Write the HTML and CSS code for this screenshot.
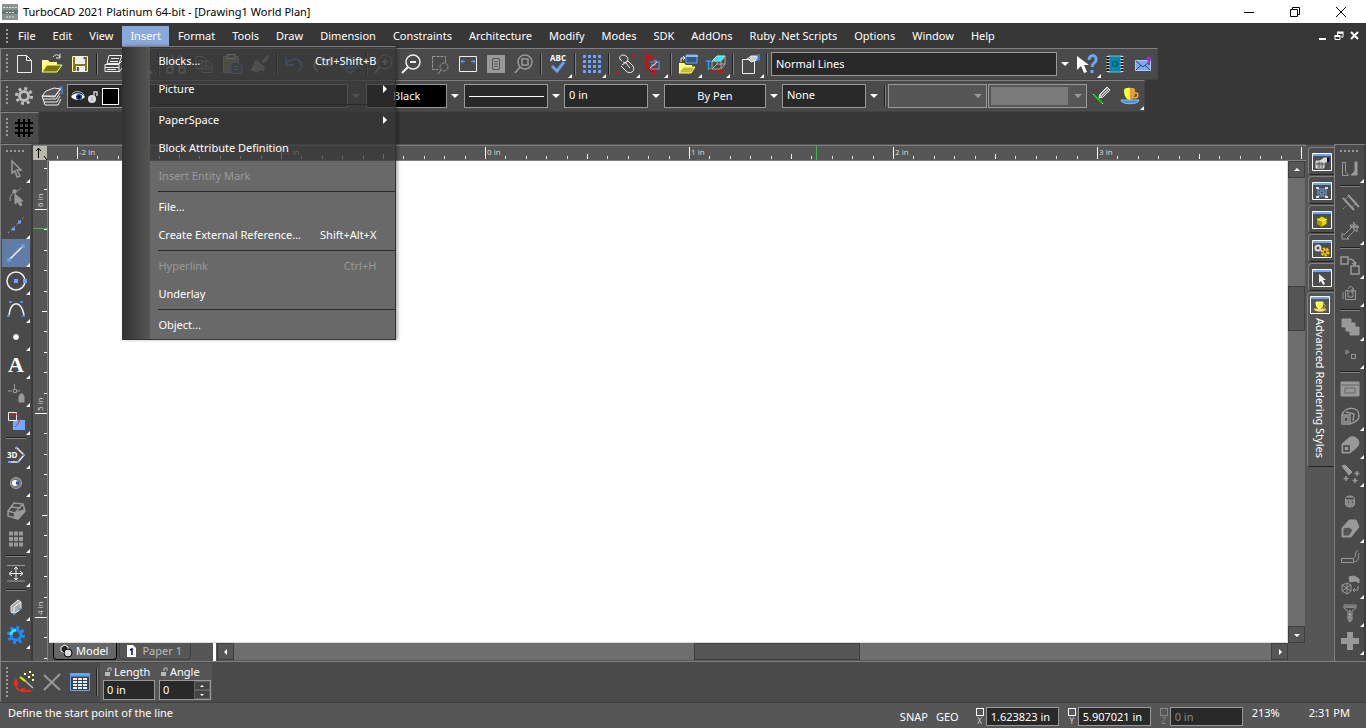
FILE: index.html
```html
<!DOCTYPE html>
<html lang="en">
<head>
    <meta charset="utf-8">
    <title>TurboCAD 2021 Platinum 64-bit - [Drawing1 World Plan]</title>
    <link rel="stylesheet" href="styles.css">
</head>
<body>
    <!-- Title bar -->
    <header class="titlebar">
        <svg class="app-icon" width="16" height="16" viewBox="0 0 16 16"><path fill="#8a9290" d="M0 0h16v16H0z"/><path fill="#6b7673" d="M0 6h16v4H0z"/><path stroke="#dde2e0" d="M1 3.500h14M4 8.500h8M4 13h8" stroke-dasharray="2 1"/></svg>
        <h1>TurboCAD 2021 Platinum 64-bit - [Drawing1 World Plan]</h1>
        <div class="window-buttons">
            <button aria-label="Minimize"><svg width="12" height="12"><path d="M1 6.500h10"/></svg></button>
            <button aria-label="Restore"><svg width="12" height="12"><path d="M1.500 3.500h7v7h-7zM3.500 3.500v-2h7v7h-2"/></svg></button>
            <button aria-label="Close"><svg width="12" height="12"><path d="M1 1l10 10M11 1L1 11"/></svg></button>
        </div>
    </header>

    <!-- Menu bar -->
    <nav class="menubar">
        <i class="grip"></i>
        <button>File</button>
        <button>Edit</button>
        <button>View</button>
        <div class="menu-open">
            <button class="active">Insert</button>
            <div class="dropdown">
                <button>Blocks...<kbd>Ctrl+Shift+B</kbd></button>
                <button class="submenu">Picture</button>
                <hr>
                <button class="submenu">PaperSpace</button>
                <button>Block Attribute Definition</button>
                <button disabled>Insert Entity Mark</button>
                <hr>
                <button>File...</button>
                <button>Create External Reference...<kbd>Shift+Alt+X</kbd></button>
                <hr>
                <button disabled>Hyperlink<kbd>Ctrl+H</kbd></button>
                <button>Underlay</button>
                <hr>
                <button>Object...</button>
            </div>
        </div>
        <button>Format</button>
        <button>Tools</button>
        <button>Draw</button>
        <button>Dimension</button>
        <button>Constraints</button>
        <button>Architecture</button>
        <button>Modify</button>
        <button>Modes</button>
        <button>SDK</button>
        <button>AddOns</button>
        <button>Ruby .Net Scripts</button>
        <button>Options</button>
        <button>Window</button>
        <button>Help</button>
        <div class="mdi-buttons">
            <button aria-label="Minimize drawing"><svg width="10" height="10"><path d="M1 8h7" stroke-width="2"/></svg></button>
            <button aria-label="Restore drawing"><svg width="10" height="10"><path d="M1 5.500h5v3H1zM3.500 4V2H9v4H7"/><path d="M3 1.500h6.500M.5 5h6" stroke-width="2"/></svg></button>
            <button aria-label="Close drawing"><svg width="10" height="10"><path d="M1 1l7 7M8 1L1 8" stroke-width="2"/></svg></button>
        </div>
    </nav>

    <!-- Standard toolbar -->
    <div class="toolbar">
        <i class="grip"></i>
        <button class="tool" aria-label="New"><svg viewBox="0 0 24 24"><path d="M5.500 3.500h9l5 5v12h-14zM14.500 3.500v5h5"/></svg></button>
        <button class="tool" aria-label="Open"><svg viewBox="0 0 24 24"><path d="M2 20V8h6l2 2h7v3H7z" fill="#ffff8a" stroke="none"/><path d="M2 20l5-7h15l-5 7z" fill="#767600" stroke="#ffff8a"/><path d="M13 5c2-3 5-3 7 0M20 1.500V6h-4"/></svg></button>
        <button class="tool" aria-label="Save"><svg viewBox="0 0 24 24"><path d="M4.500 4.500h15v15h-15z" fill="#7c7c16" stroke="#ffff9a"/><path d="M7 4h10v8H7zM8 14h9v6H8z" fill="#eee" stroke="none"/><path d="M10 15v4M16.500 5v2" stroke="#555" stroke-width="2"/></svg></button>
        <i class="sep"></i>
        <button class="tool" aria-label="Print"><svg viewBox="0 0 24 24"><path d="M7 3.500h13l-3 8H5z"/><path d="M9 6.500h8M8 9.500h8M3 12.500h14v7H3zM17 12l5-5v7l-5 6M3 15.500h14M5 17.500h9"/></svg></button>
        <button class="tool" aria-label="Print preview"><svg viewBox="0 0 24 24"><path d="M4 3.500h10v14H4z"/><circle cx="14" cy="13" r="5"/><path d="M17 17l4 4" stroke-width="2"/></svg></button>
        <i class="sep"></i>
        <button class="tool" aria-label="Cut"><svg class="dim" viewBox="0 0 24 24" stroke-width="2"><path d="M7 3l9 12M17 3L8 15"/><circle cx="6" cy="18" r="3"/><circle cx="18" cy="18" r="3"/></svg></button>
        <button class="tool" aria-label="Copy"><svg class="dim" viewBox="0 0 24 24"><path d="M4 4.500h7l3 3v9H4zM10 9.500h7l3 3v8H10zM6 8.500h5M6 11.500h3M12 14h6M12 17h6"/></svg></button>
        <button class="tool" aria-label="Paste"><svg viewBox="0 0 24 24"><path d="M3.500 4.500h15v16h-15z" fill="#99936c" stroke="#aaa"/><path d="M7 2.500h8v4H7z" fill="#777"/><path d="M11 10.500h7l4 4v7H11z" fill="#555" stroke="#68a1ee"/><path d="M13 14.500h5M13 17.500h6" stroke="#68a1ee"/></svg></button>
        <button class="tool" aria-label="Format painter"><svg class="dim" viewBox="0 0 24 24"><path d="M14 9l6-6 1 2-5 6zM8 8l9 8-2 3-9-8zM7 11l-4 7 6 2 5-3z" fill="#999"/></svg></button>
        <i class="sep"></i>
        <button class="tool" aria-label="Undo"><svg class="blue" viewBox="0 0 24 24" stroke-width="2"><path d="M4 5v8h8M4 12c5-6 12-6 15-1 2 4-1 7-3 8"/></svg></button>
        <button class="tool" aria-label="Redo"><svg class="dim" viewBox="0 0 24 24" stroke-width="2"><path d="M20 5v8h-8M20 12C15 6 8 6 5 11c-2 4 1 7 3 8"/></svg></button>
        <button class="tool" aria-label="Orbit"><svg class="blue" viewBox="0 0 24 24" stroke-width="2"><path d="M12 4v13M8 9l4-5 4 5M8 18l4 3 4-3"/><path d="M7 7c-8 6-3 9 5 9s13-4 5-9"/></svg></button>
        <i class="sep"></i>
        <button class="tool" aria-label="Zoom in"><svg class="dim" viewBox="0 0 24 24"><circle cx="13" cy="10" r="7"/><path d="M8 15l-5 6M10 10h6M13 7v6" stroke-width="2"/></svg></button>
        <button class="tool" aria-label="Zoom out"><svg viewBox="0 0 24 24"><circle cx="13" cy="10" r="7" stroke-width="1.500"/><path d="M8 15l-6 6M10 10h6" stroke-width="2"/></svg></button>
        <button class="tool" aria-label="Zoom window"><svg class="dim" viewBox="0 0 24 24"><path d="M4.500 4.500h13v7M4.500 4.500v13h6" stroke-dasharray="3 1"/><circle cx="16" cy="15" r="4" stroke-dasharray="3 1"/><path d="M13 18l-3 4"/></svg></button>
        <button class="tool" aria-label="Zoom extents"><svg viewBox="0 0 24 24"><path d="M3.500 4.500h17v15h-17z"/><path d="M5 9.500h4M19 9.500h-4M7 7.500l-2 2 2 2M17 7.500l2 2-2 2" stroke="#5da4ff"/></svg></button>
        <button class="tool" aria-label="Full view"><svg viewBox="0 0 24 24"><path d="M3 3h18v18H3z" fill="#999" stroke="none"/><path d="M8.500 6.500h7v11h-7zM10 9.500h4M10 12h4M10 14.500h4" stroke="#555"/></svg></button>
        <button class="tool" aria-label="Zoom selection"><svg class="dim" viewBox="0 0 24 24"><circle cx="13" cy="10" r="7" stroke-width="1.500"/><path d="M10 7h6v6h-6zM8 15l-5 6" stroke-width="1.500"/></svg></button>
        <i class="sep"></i>
        <button class="tool more" aria-label="Spelling"><svg viewBox="0 0 24 24"><text x="4" y="9">ABC</text><path d="M6 14l5 5 7-9" stroke="#699ff0" stroke-width="3"/></svg></button>
        <i class="sep"></i>
        <button class="tool more" aria-label="Grid"><svg viewBox="0 0 24 24"><path d="M3 4.500h18M3 9.500h18M3 14.500h18M3 19.500h18" stroke="#66a5ff" stroke-width="3" stroke-dasharray="3 2"/></svg></button>
        <i class="sep"></i>
        <button class="tool more" aria-label="Snap"><svg viewBox="0 0 24 24"><path d="M8 9C3 6 7 1 12 4c4 3 1 8-3 6M8 13l6-4 5 5c3 5-3 9-7 5l-5-5M12 11l4 5"/><path d="M2 21h3M3.500 19.500v3M17 3l2 2 2-2M19 5v2" stroke="#e00"/></svg></button>
        <button class="tool more" aria-label="Workplane"><svg viewBox="0 0 24 24"><path d="M5 3l7 5v13l-7-6z" stroke="#e00" stroke-width="2"/><path d="M8 10h9v7H8M12 8l5 2M9 13h5" stroke="#5b83bc" stroke-width="1.500"/><path d="M8 16l7-6"/></svg></button>
        <i class="sep"></i>
        <button class="tool more" aria-label="Layers"><svg viewBox="0 0 24 24"><path d="M10 3h11v8H10z" fill="#315a87" stroke="#6ca2ec"/><path d="M10 4h12" stroke="#8cbcff" stroke-width="2"/><path d="M3 21V11h5l2 2h6v8z" fill="#ffff76" stroke="none"/><path d="M3 21l4-6h12l-4 6z" fill="#c0bd36" stroke="#ffff76"/><path d="M5 10V6h4M7 4l2 2-2 2"/></svg></button>
        <button class="tool more" aria-label="Axes"><svg viewBox="0 0 24 24"><path d="M8 9l5-5h8l-4 5z" fill="#0ff" stroke="#aff"/><path d="M8 9h9v8H8zM17 9l4-5v8l-4 5M8 17l5-5h8M13 12V4" stroke="#aaa"/><path d="M2 9h5M4.500 9v9" stroke="#39f" stroke-width="1.500"/><path d="M5 19h14M16 17l3 2-3 2" stroke="#e00"/><path d="M5 18l4-4" stroke="#0c0"/></svg></button>
        <i class="sep"></i>
        <button class="tool more" aria-label="Properties"><svg viewBox="0 0 24 24"><path d="M4.500 7.500h12v14h-12z"/><path d="M8 8l5-4h6v4l-6 2-2-2 3-3" fill="#ccc"/><path d="M19 3h2v5h-3" stroke="#3e8bf5" stroke-width="1.500"/></svg></button>
        <i class="sep"></i>
        <select class="field style-name" aria-label="Style"><option>Normal Lines</option></select><i class="caret"></i>
        <button class="tool more" aria-label="Context help"><svg viewBox="0 0 24 24"><path d="M2 4v14l4-4 3 7 3-1-3-7h5z" fill="#fff" stroke="none"/><path d="M14 8c0-6 8-6 7 0 0 3-4 3-4 7M17 18v3" stroke="#6aa5f6" stroke-width="3"/></svg></button>
        <button class="tool" aria-label="Address book"><svg viewBox="0 0 24 24"><path d="M5 4h14v16H5z" fill="#0a86ad" stroke="#6bd"/><path d="M5 4v16M19 4v16" stroke="#111" stroke-width="2"/><path d="M5 4v16M19 4v16" stroke="#ddd" stroke-width="3" stroke-dasharray="1 2"/><circle cx="12" cy="12" r="2.500" stroke="#045"/></svg></button>
        <button class="tool" aria-label="Send mail"><svg viewBox="0 0 24 24"><path d="M4.500 8.500h15v10h-15z" fill="#78aaf5" stroke="#a9ccff"/><path d="M5 9l7 6 7-6M5 18l5-5M19 18l-5-5" stroke="#346"/><path d="M18 13V6M15.500 8L18 5l2.500 3" stroke="#8a36ba" stroke-width="2"/></svg></button>
    </div>

    <!-- Property toolbar -->
    <div class="toolbar">
        <i class="grip"></i>
        <button class="tool" aria-label="Settings"><svg class="light" viewBox="0 0 24 24"><circle cx="12" cy="12" r="4.500" stroke-width="3"/><circle cx="12" cy="12" r="7.500" stroke-width="3" stroke-dasharray="3 2.890"/></svg></button>
        <button class="tool" aria-label="Layer manager"><svg viewBox="0 0 24 24"><path d="M2 12l4-5 8-3 7 1-5 6-1 2z" fill="#555"/><path d="M2 12h13l5-7M3 15h13l4-6M4 18h13l3-6M5 21h13l3-6M2 12l3 9"/><path d="M19 3h3v7" stroke="#448ae0" stroke-width="1.500"/></svg></button>
        <div class="layer-field">
            <svg width="16" height="16" viewBox="0 0 16 16"><path d="M1 9c3-5 10-5 14 0-4 4-10 4-14 0z" fill="#fff"/><path d="M2 6c4-4 9-3 12 1" stroke="#bbb"/><circle cx="9" cy="9" r="3" fill="#1747a3"/><circle cx="9" cy="9" r="1.500" fill="#000"/></svg>
            <svg width="14" height="16" viewBox="0 0 14 16"><circle cx="6" cy="11" r="4" fill="#ddd"/><path d="M8 8V4h3v4" stroke="#ccc" stroke-width="1.500"/><path d="M6 9v4" stroke="#999"/></svg>
            <span class="swatch"></span>
            <select class="layer-name" aria-label="Layer"><option></option></select>
        </div><i class="caret dark"></i>
        <select class="field pen-color" aria-label="Pen color"><option>Black</option></select><i class="caret"></i>
        <select class="field pen-line" aria-label="Line pattern"><option></option></select><i class="caret"></i>
        <select class="field" aria-label="Pen width"><option>0 in</option></select><i class="caret"></i>
        <select class="field by-pen" aria-label="Line scale"><option>By Pen</option></select><i class="caret"></i>
        <select class="field brush" aria-label="Brush pattern"><option>None</option></select><i class="caret"></i>
        <i class="sep"></i>
        <div class="blank-combo"><select disabled aria-label="Brush style"><option></option></select><i class="caret dark"></i></div>
        <div class="blank-combo filled"><select disabled aria-label="Brush color"><option></option></select><i class="caret dark"></i></div>
        <button class="tool" aria-label="Pick properties"><svg viewBox="0 0 24 24"><path d="M3 10l3 3M9 16l4 4" stroke="#ddd"/><path d="M4 11l8 8" stroke="#0e0" stroke-width="1.500"/><path d="M9 14l1-4 7-7 3 3-7 7z" fill="#bbb"/><path d="M11 11l7-7M12 13l7-7" stroke="#666"/></svg></button>
        <button class="tool more" aria-label="Materials"><svg viewBox="0 0 24 24"><path d="M3 16c0 5 18 5 18 0z" fill="#4a91dd" stroke="#8bf"/><path d="M6 6c0 13 11 13 11 0 0-3-11-3-11 0z" fill="#ff3" stroke="none"/><path d="M12 4c5 0 5 2 5 3 0 7-2 9-5 9z" fill="#e89c38" stroke="none"/><path d="M17 9c4-1 4 5-1 5" stroke="#ffb12e" stroke-width="1.500"/></svg></button>
    </div>

    <div class="toolbar">
        <i class="grip"></i>
        <button class="tool" aria-label="Show grid"><svg viewBox="0 0 24 24"><path d="M7 3v18M12 3v18M17 3v18M3 7h18M3 12h18M3 17h18" stroke="#000" stroke-width="2"/></svg></button>
    </div>

    <!-- Workspace -->
    <main class="workspace">
        <div class="side-tools">
            <i class="grip-h"></i>
            <button class="tool more" aria-label="Select"><svg class="dim" viewBox="0 0 24 24"><path d="M8 4v12l3-2 2 6 3-1-3-6h4z" stroke-width="1.500"/></svg></button>
            <button class="tool" aria-label="Edit node"><svg class="dim" viewBox="0 0 24 24"><path d="M6 16c0-5 1-7 5-9s4-2 6-4"/><path d="M9 5h3v3H9zM11 9v10l3-2 2 4 2-1-2-4h3z" fill="#999"/></svg></button>
            <button class="tool more" aria-label="Polyline"><svg class="dim" viewBox="0 0 24 24"><path d="M4 20L20 4" stroke-dasharray="2 2"/><path d="M8 16h3M14 9h3" stroke="#6ca2f4" stroke-width="3"/></svg></button>
            <button class="tool more selected" aria-label="Line"><svg viewBox="0 0 24 24"><path d="M5 19L19 5" stroke-width="1.500"/><path d="M4 18h2v2H4zM18 4h2v2h-2z" stroke="#69a0f2" stroke-width="1.500"/></svg></button>
            <button class="tool more" aria-label="Circle"><svg viewBox="0 0 24 24"><circle cx="12" cy="12" r="9" stroke-width="1.500"/><path d="M11 11h2v2h-2zM20 11h2v2h-2z" stroke="#6ba4ff" stroke-width="2"/></svg></button>
            <button class="tool more" aria-label="Curve"><svg viewBox="0 0 24 24"><path d="M5 18C7 3 17 3 20 18" stroke-width="1.500"/><path d="M3 19h3M18 19h3M5 5h3M16 5h3" stroke="#5787e6" stroke-width="2"/></svg></button>
            <button class="tool more" aria-label="Point"><svg viewBox="0 0 24 24"><circle cx="12" cy="12" r="2.500" fill="#fff"/></svg></button>
            <button class="tool more letter" aria-label="Text">A</button>
            <button class="tool more" aria-label="Constraint"><svg class="dim" viewBox="0 0 24 24"><path d="M4 10h4M10.500 3v5M13 10h3M9.500 8.500h3v3h-3z"/><path d="M15 15h5v6h-5zM16 15v-2h3v2" fill="#999"/></svg></button>
            <button class="tool more" aria-label="Copy entity"><svg viewBox="0 0 24 24"><path d="M9 11h12v10H9z" fill="#70aaff" stroke="none"/><path d="M4.500 3.500h8v8h-8z"/><path d="M6 6c12-4 12 6 5 12" stroke="#d8213d"/></svg></button>
            <i class="sep-h"></i>
            <button class="tool more" aria-label="3D polyline"><svg viewBox="0 0 24 24"><text x="3" y="15">3D</text><path d="M12 4l8 8-6 7H5" stroke-width="1.500"/><path d="M11 5h2M19 12h2M4 19h3M13 19h2" stroke="#6aa2fb" stroke-width="2"/></svg></button>
            <button class="tool more" aria-label="Sphere"><svg viewBox="0 0 24 24"><circle cx="12" cy="12" r="5.500" fill="#777" stroke="#aaa"/><circle cx="11" cy="12" r="3" fill="#fff" stroke="none"/><path d="M12 12h3" stroke="#2758a0" stroke-width="3"/></svg></button>
            <button class="tool more" aria-label="3D modify"><svg class="dim" viewBox="0 0 24 24" stroke-width="1.500"><path d="M4 12l6-8 9 1 2 7-7 8-10-3zM4 12l7 2 8-9M7 8l9 1"/><path d="M11 14l9-3v2l-6 7-4-1z" fill="#999"/></svg></button>
            <button class="tool more" aria-label="Array"><svg viewBox="0 0 24 24"><path d="M5 6.500h15M5 12h15M5 17.500h15" stroke="#999" stroke-width="4" stroke-dasharray="4 1"/></svg></button>
            <i class="sep-h"></i>
            <button class="tool more" aria-label="Dimension"><svg viewBox="0 0 24 24"><path d="M3 4.500h18M3 20h18" stroke="#999"/><path d="M12 6v13M6 12.500h13M10 8l2-2 2 2M10 17l2 2 2-2M8 10l-3 2.500L8 15M16 10l3 2.500-3 2.500"/></svg></button>
            <i class="sep-h"></i>
            <button class="tool more" aria-label="Viewport"><svg viewBox="0 0 24 24"><path d="M7 11l7-6 3 2v7l-7 5-3-2z" fill="#aaa"/><path d="M10 12l7-5M10 12v7" stroke="#fff"/><path d="M9 19h2M15 14h2" stroke="#5a91dc" stroke-width="2"/></svg></button>
            <button class="tool more" aria-label="Render settings"><svg viewBox="0 0 24 24"><g stroke="#1b8cff"><circle cx="12" cy="12" r="5" stroke-width="3"/><circle cx="12" cy="12" r="7.500" stroke-width="3" stroke-dasharray="3 2.890"/></g><path d="M7 12a5 5 0 0 1 5-5" stroke="#2fe4ff" stroke-width="3"/></svg></button>
        </div>

        <div class="document">
            <div class="ruler-row">
                <svg class="ruler-corner" width="14" height="14" viewBox="0 0 14 14"><path d="M5.500 12V2M3 5l2.500-3L8 5M11 10l3 4" stroke="#000"/></svg>
                <svg class="ruler-top" width="100%" height="14">
                    <defs>
                        <pattern id="inch-x" x="30" width="204" height="14" patternUnits="userSpaceOnUse"><path stroke="#fff" d="M.5 1v12M20.500 10v3M41.500 10v3M61.500 10v3M82.500 10v3M102.500 8v5M122.500 10v3M143.500 10v3M163.500 10v3M184.500 10v3"/></pattern>
                    </defs>
                    <rect width="100%" height="14" fill="url(#inch-x)"/>
                    <text x="32" y="9">-2 in</text>
                    <text x="236" y="9">-1 in</text>
                    <text x="440" y="9">0 in</text>
                    <text x="644" y="9">1 in</text>
                    <text x="848" y="9">2 in</text>
                    <text x="1052" y="9">3 in</text>
                    <path d="M769.500 0v14" stroke="#40b050"/>
                </svg>
            </div>
            <div class="ruler-body">
                <svg class="ruler-left" width="14" height="100%">
                    <defs>
                        <pattern id="inch-y" y="49" width="14" height="204" patternUnits="userSpaceOnUse"><path stroke="#fff" d="M2 .5h12M11 20.500h3M11 41.500h3M11 61.500h3M11 82.500h3M9 102.500h5M11 122.500h3M11 143.500h3M11 163.500h3M11 184.500h3"/></pattern>
                    </defs>
                    <rect width="14" height="100%" fill="url(#inch-y)"/>
                    <text transform="translate(10 47) rotate(-90)">6 in</text>
                    <text transform="translate(10 251) rotate(-90)">5 in</text>
                    <text transform="translate(10 455) rotate(-90)">4 in</text>
                    <path d="M0 68.500h14" stroke="#40b050"/>
                </svg>
                <div class="sheet">
                    <div class="sheet-main">
                        <div class="canvas"></div>
                        <div class="scroll-v">
                            <button aria-label="Scroll up"><svg width="8" height="8"><path d="M1 5h6L4 2z"/></svg></button>
                            <div class="track"><div class="thumb"></div></div>
                            <button aria-label="Scroll down"><svg width="8" height="8"><path d="M1 3h6L4 6z"/></svg></button>
                        </div>
                    </div>
                    <div class="sheet-foot">
                        <div class="tabs">
                            <button class="tab active"><svg width="14" height="14" viewBox="0 0 14 14"><path d="M2 3l4-2 3 2v5L5 9 2 7z" fill="#222" stroke="#fff"/><circle cx="9" cy="9" r="4" fill="#ddd" stroke="#000"/></svg>Model</button>
                            <button class="tab"><svg width="14" height="14" viewBox="0 0 14 14"><path d="M2 1h6l3 3v9H2z" fill="#fff"/><path d="M5 6l2-1v6" stroke="#00a" stroke-width="1.500"/></svg>Paper 1</button>
                        </div>
                        <div class="scroll-h">
                            <button aria-label="Scroll left"><svg width="8" height="8"><path d="M5 1v6L2 4z"/></svg></button>
                            <div class="track"><div class="thumb"></div></div>
                            <button aria-label="Scroll right"><svg width="8" height="8"><path d="M3 1v6l3-3z"/></svg></button>
                        </div>
                    </div>
                </div>
            </div>
        </div>

        <!-- Docked palettes -->
        <div class="palettes">
            <button class="palette" aria-label="Selection info"><svg viewBox="0 0 22 20"><path class="frame" d="M1.500 1.500h19v17h-19z"/><path d="M2 3h18" stroke="#6aa6ff" stroke-width="2"/><path d="M5 9h8v7H5z" fill="#bbb"/><path d="M5 12h8M8 10v6M11 10v6" stroke="#555"/><path d="M9 9l4-3h3v4h-5" fill="#ddd"/><path d="M17 6v4" stroke="#006" stroke-width="2"/></svg></button>
            <button class="palette" aria-label="Library"><svg viewBox="0 0 22 20"><path class="frame" d="M1.500 1.500h19v17h-19z"/><path d="M2 3h18" stroke="#6aa6ff" stroke-width="2"/><path d="M7 8h8v7H7zM9 10h4v3H9z" stroke="#70a8ef"/><path d="M5 7h3M14 7h3M5 16h3M14 16h3" stroke-width="2"/></svg></button>
            <button class="palette" aria-label="Blocks"><svg viewBox="0 0 22 20"><path class="frame" d="M1.500 1.500h19v17h-19z"/><path d="M2 3h18" stroke="#6aa6ff" stroke-width="2"/><path d="M6 9l5-3 5 3v5l-5 3-5-3z" fill="#e7d500" stroke="#665c00"/><path d="M6 9l5 2v6l-5-3z" fill="#a79a00" stroke="none"/><path d="M6 9l5 2 5-2" stroke="#ff8"/></svg></button>
            <button class="palette" aria-label="Tools"><svg viewBox="0 0 22 20"><path class="frame" d="M1.500 1.500h19v17h-19z"/><path d="M2 3h18" stroke="#6aa6ff" stroke-width="2"/><circle cx="7" cy="9" r="2.500" stroke-width="2"/><circle cx="14" cy="13" r="3" stroke="#ffc400" stroke-width="3" stroke-dasharray="2 1"/><circle cx="14" cy="13" r="2" stroke="#ffc400"/></svg></button>
            <button class="palette" aria-label="Selector"><svg viewBox="0 0 22 20"><path class="frame" d="M1.500 1.500h19v17h-19z"/><path d="M2 3h18" stroke="#6aa6ff" stroke-width="2"/><path d="M8 6v9l2-2 2 4 2-1-2-4h3z" fill="#eee" stroke="none"/></svg></button>
            <button class="palette open"><svg viewBox="0 0 22 20"><path class="frame" d="M1.500 1.500h19v17h-19z"/><path d="M2 3h18" stroke="#6aa6ff" stroke-width="2"/><path d="M5 14c0 3 12 3 12 0z" fill="#ef9" stroke="#eb3"/><path d="M7 7c0 9 7 9 7 0z" fill="#ff3" stroke="#ff9"/><path d="M14 9c3 0 3 4-1 4" stroke="#f7a928"/></svg><span>Advanced Rendering Styles</span></button>
        </div>

        <div class="side-tools right">
            <i class="grip-h"></i>
            <button class="tool more" aria-label="Trim"><svg class="dim" viewBox="0 0 24 24"><path d="M4.500 5.500h3v9l3 4h-6z"/><path d="M19 5h-2v9l-4 4h6z" fill="#999"/></svg></button>
            <i class="sep-h"></i>
            <button class="tool" aria-label="Offset"><svg class="dim" viewBox="0 0 24 24"><path d="M5 7l11 12M10 4l11 12" stroke-width="2"/><path d="M5 18l3-3M14 16l5-5M6 10l5-5" stroke-dasharray="2 1"/></svg></button>
            <button class="tool more" aria-label="Stretch"><svg class="dim" viewBox="0 0 24 24"><path d="M4 20v-6l2 2 8-8-2-2h7v7l-2-2-8 8 2 1z"/><path d="M16 3v8M12 8h9" stroke-width="1.500"/></svg></button>
            <i class="sep-h"></i>
            <button class="tool more" aria-label="Move copy"><svg class="dim" viewBox="0 0 24 24" stroke-width="1.500"><path d="M3 4h7v7H3zM13 13h8v8h-8zM11 6c4 0 6 2 6 6M14 10l3 2 1-3"/></svg></button>
            <button class="tool more" aria-label="Export"><svg class="dim" viewBox="0 0 24 24"><path d="M10 9.500H7.500v9h10v-9H15M10 16v-6h5v6zM10 8l2.500-3L16 8h-2v4M5 18v-7"/></svg></button>
            <i class="sep-h"></i>
            <button class="tool more" aria-label="Union"><svg class="dim" viewBox="0 0 24 24"><path d="M4 4h9v4h4v4h4v8h-9v-4H8v-4H4z" fill="#999"/></svg></button>
            <button class="tool more" aria-label="Subtract"><svg class="dim" viewBox="0 0 24 24"><path d="M8 7l3 2-3 2zM13.500 11.500h4v4h-4z"/></svg></button>
            <i class="sep-h"></i>
            <button class="tool" aria-label="Library"><svg class="dim" viewBox="0 0 24 24"><path d="M3 5h18v14H3z" fill="#999"/><path d="M3 8h18M7 11h10v5H7z" stroke="#666"/></svg></button>
            <button class="tool more" aria-label="Surface"><svg class="dim" viewBox="0 0 24 24"><path d="M4 10h8v9H4zM8 7l8 2-1 7M6 12h4v5H6zM4 10c3-9 17-9 17 1 0 4-3 6-9 8" stroke-width="1.500"/></svg></button>
            <button class="tool more" aria-label="Extrude"><svg class="dim" viewBox="0 0 24 24"><path d="M4 11l8-7c8-2 12 7 6 11l-6 5H4z" fill="#999"/><path d="M6 13h5v5H6z" stroke="#444" stroke-width="1.500"/></svg></button>
            <button class="tool more" aria-label="Explode"><svg class="dim" viewBox="0 0 24 24"><path d="M4 5l3-1 7 7-3 3z" fill="#999"/><path d="M8 15v5M5.500 17.500h5M19 10v5M16.500 12.500h5M17 17v5M14.500 19.500h5" stroke-width="1.500"/></svg></button>
            <button class="tool" aria-label="Cylinder"><svg class="dim" viewBox="0 0 24 24"><path d="M7.500 10c0-4 9-4 9 0v5c0 4-9 4-9 0z" fill="#888"/><path d="M8 9.500h8M10 13h1M14 13h1" stroke="#444" stroke-width="1.500"/></svg></button>
            <button class="tool more" aria-label="Chamfer"><svg class="dim" viewBox="0 0 24 24"><path d="M4 11l7-8h7l3 7-8 10H4z" fill="#999"/><path d="M5 11l6-1 4 3-4 6H5z" fill="#555"/></svg></button>
            <button class="tool" aria-label="Sweep"><svg class="dim" viewBox="0 0 24 24"><path d="M3.500 13.500h12v4h-12zM16 13c3-2 0-6 4-8M16 17c6-1 4-6 5-9"/></svg></button>
            <button class="tool more" aria-label="Assemble"><svg class="dim" viewBox="0 0 24 24"><path d="M11 4l5-1 5 3v4l-3-2-6 1z" fill="#999"/><path d="M4 12l5-2 4 2v6l-4 3-5-3zM4 12l9 6M9 10v11M13 12l-9 6M20 13v4h-5M17 15l-2 2 2 2"/></svg></button>
            <button class="tool more" aria-label="Screw"><svg class="dim" viewBox="0 0 24 24"><path d="M6 4h12v3l-4 3v9l-2 2-2-2v-9L6 7z"/><path d="M7 6h10M12 9v11M10 13l4 1M10 16l4 1" stroke-width="1.500"/></svg></button>
            <button class="tool more" aria-label="Add"><svg viewBox="0 0 24 24"><path d="M12 3v18M3 12h18" stroke="#999" stroke-width="6"/></svg></button>
        </div>
    </main>

    <!-- Inspector bar -->
    <div class="inspector">
        <i class="grip"></i>
        <button class="tool" aria-label="Magic"><svg viewBox="0 0 24 24"><path d="M4 9v7c1 3 4 5 7 5h8" stroke="#f02a18" stroke-width="2"/><path d="M2 13h4M9 20h4" stroke="#f02a18" stroke-width="4"/><path d="M10 8l11 10" stroke="#bbb" stroke-width="1.500"/><path d="M8 7l5 4" stroke="#e7e700" stroke-width="2"/><path d="M12 4h2M17 2h2M16 7h2M20 5h2M20 10h2" stroke="#ffffae" stroke-width="2"/></svg></button>
        <button class="tool" aria-label="Cancel"><svg class="dim" viewBox="0 0 24 24" stroke-width="2"><path d="M4 5l16 15M20 4L4 20"/></svg></button>
        <button class="tool" aria-label="Table"><svg viewBox="0 0 24 24"><path d="M2.500 3.500h19v17h-19z" fill="#345" stroke="#6aa2f2"/><path d="M3 5h18" stroke="#6aa2f2" stroke-width="3"/><path d="M5 9h14M5 12h14M5 15h14M5 18h14" stroke="#eee" stroke-width="2" stroke-dasharray="4 1"/></svg></button>
        <i class="sep"></i>
        <div class="coords">
            <div class="coord">
                <label for="length"><svg width="8" height="10"><path d="M1 5h5v4H1z" fill="#bbb"/><path d="M4 4V1h3v3" stroke="#bbb"/></svg>Length</label>
                <input id="length" type="text" value="0 in">
            </div>
            <div class="coord">
                <label for="angle"><svg width="8" height="10"><path d="M1 5h5v4H1z" fill="#bbb"/><path d="M4 4V1h3v3" stroke="#bbb"/></svg>Angle</label>
                <div class="spinner">
                    <input id="angle" type="text" value="0">
                    <div class="spin-buttons">
                        <button aria-label="Increase angle"><svg width="4" height="2"><path d="M0 2h4L2 0z"/></svg></button>
                        <button aria-label="Decrease angle"><svg width="4" height="2"><path d="M0 0h4L2 2z"/></svg></button>
                    </div>
                </div>
            </div>
        </div>
    </div>

    <!-- Status bar -->
    <footer class="statusbar">
        <p class="hint">Define the start point of the line</p>
        <button>SNAP</button>
        <button>GEO</button>
        <div class="axis"><label><input type="checkbox">X</label><input type="text" value="1.623823 in" aria-label="X position"></div>
        <div class="axis"><label><input type="checkbox">Y</label><input type="text" value="5.907021 in" aria-label="Y position"></div>
        <div class="axis off"><label><input type="checkbox" disabled>Z</label><input type="text" value="0 in" disabled aria-label="Z position"></div>
        <span class="zoom">213%</span>
        <span class="clock">2:31 PM</span>
    </footer>
</body>
</html>
```
FILE: styles.css
```css
:root {
    --back: #373737;
    --bar: #4a4a4a;
    --panel: #565656;
    --track: #6e6e6e;
    --edge: #808080;
    --field: #292929;
    --field-edge: #999;
    --text: #fff;
    --dim: #999;
}

* {
    margin: 0;
    padding: 0;
    box-sizing: border-box;
}

body {
    font: 11px/16px "Noto Sans", "Open Sans", sans-serif;
    background: var(--back);
    color: var(--text);
    display: flex;
    flex-direction: column;
    height: 100vh;
    overflow: hidden;
}

button, select, input {
    font: inherit;
    color: inherit;
    background: none;
    border: none;
    border-radius: 0;
}

select {
    appearance: none;
}

select:disabled {
    opacity: 1;
}

svg {
    display: block;
    flex: none;
    fill: none;
    stroke: none;
}

/* Title bar */
.titlebar {
    display: flex;
    align-items: center;
    height: 23px;
    padding-left: 2px;
    gap: 5px;
    background: #fff;
    color: #000;
}

.titlebar h1 {
    font-size: 11px;
    font-weight: normal;
    flex: 1;
}

.window-buttons {
    display: flex;
    padding-right: 2px;
}

.window-buttons button {
    width: 46px;
    height: 20px;
    display: grid;
    place-items: center;
}

.window-buttons svg {
    stroke: #000;
}

/* Menu bar */
.menubar {
    display: flex;
    align-items: center;
    gap: 1px;
    height: 25px;
    flex: none;
}

.menubar > button, .menu-open > button {
    height: 20px;
    padding: 0 8px;
}

.menu-open {
    position: relative;
}

.menubar .active {
    background: #88a9da;
}

.mdi-buttons {
    display: flex;
    gap: 6px;
    margin-left: auto;
    padding-right: 6px;
}

.mdi-buttons svg {
    stroke: #fff;
}

/* Insert menu, see-through over the toolbars */
.dropdown {
    position: absolute;
    top: 20px;
    left: 0;
    z-index: 5;
    width: 274px;
    padding-left: 27px;
    border: 1px solid #333;
    border-top-color: var(--edge);
    background: linear-gradient(to right, #333, #555) left / 27px 100% no-repeat, rgba(55, 55, 55, 0.75);
    box-shadow: 2px 0 3px rgba(0, 0, 0, 0.3);
}

.dropdown button {
    display: flex;
    align-items: center;
    justify-content: space-between;
    width: 100%;
    height: 28px;
    padding: 0 19px 0 8px;
    white-space: nowrap;
}

.dropdown button:disabled {
    color: #999;
}

.dropdown kbd {
    font: inherit;
}

.dropdown hr {
    height: 1px;
    margin: 1px 0 1px 8px;
    border: none;
    background: #292929;
}

.submenu::after {
    content: "";
    border: 4px solid transparent;
    border-left-color: #fff;
    border-right: none;
    margin-right: -11px;
}

/* Toolbars */
.toolbar {
    display: flex;
    align-items: center;
    align-self: flex-start;
    height: 32px;
    flex: none;
    border: 1px solid #424242;
    border-top-color: var(--edge);
    border-left-color: var(--edge);
    background: var(--bar);
}

.grip {
    width: 2px;
    height: 20px;
    margin: 0 2px 0 5px;
    background: repeating-linear-gradient(#999 0 2px, transparent 2px 4px);
}

.menubar .grip {
    height: 14px;
    margin: 0 1px 0 6px;
}

.tool {
    position: relative;
    display: grid;
    place-items: center;
    flex: none;
    width: 28px;
    height: 28px;
}

.tool svg {
    width: 24px;
    height: 24px;
    stroke: #eee;
}

.tool .dim {
    stroke: var(--dim);
}

.tool .light {
    stroke: #bbb;
}

.tool .blue {
    stroke: #5a86c0;
}

.tool text {
    font: bold 8px "Open Sans", sans-serif;
    fill: #fff;
    stroke: none;
}

/* small corner mark: the tool has a fly-out */
.more::after {
    content: "";
    position: absolute;
    right: 0;
    bottom: 0;
    border: 2px solid #fff;
    border-top-color: transparent;
    border-left-color: transparent;
}

.sep {
    width: 2px;
    height: 22px;
    margin: 0 2px;
    border-left: 1px solid #222;
    border-right: 1px solid var(--edge);
}

/* Combo boxes */
.field {
    width: 84px;
    height: 24px;
    padding: 0 4px 2px;
    border: 1px solid var(--field-edge);
    background-color: var(--field);
}

.caret {
    width: 16px;
    display: grid;
    place-items: center;
}

.caret::before {
    content: "";
    border: 4px solid transparent;
    border-top-color: #fff;
    border-bottom: none;
}

.caret.dark::before {
    border-top-color: var(--dim);
}

.style-name {
    width: 286px;
    margin-left: 1px;
    padding-bottom: 0;
}

.layer-field {
    display: flex;
    align-items: center;
    width: 281px;
    height: 24px;
    margin-left: 1px;
    border: 1px solid var(--field-edge);
    background: var(--field);
    padding-left: 2px;
}

.swatch {
    width: 17px;
    height: 17px;
    margin-left: 2px;
    border: 1px solid #fff;
    background: #000;
}

.layer-name {
    flex: 1;
    height: 20px;
}

.toolbar .pen-color {
    width: 81px;
    margin-left: 2px;
    padding: 0 26px;
    background: #000;
}

.pen-line {
    margin-left: 1px;
    background-image: linear-gradient(#fff, #fff);
    background-size: 75px 1px;
    background-position: center;
    background-repeat: no-repeat;
}

.by-pen {
    width: 102px;
    padding-bottom: 0;
    text-align: center;
    text-align-last: center;
}

.blank-combo {
    display: flex;
    width: 99px;
    height: 24px;
    margin-right: 1px;
    border: 1px solid var(--field-edge);
    background: var(--panel);
}

.blank-combo select {
    flex: 1;
    min-width: 0;
    margin: 2px;
}

.blank-combo.filled select {
    background: #7a7a7a;
}

/* Workspace */
.workspace {
    display: flex;
    flex: 1;
    min-height: 0;
}

.side-tools {
    width: 33px;
    padding: 3px 0 0 1px;
    display: flex;
    flex-direction: column;
    border: 1px solid var(--edge);
    border-right: 2px solid #3c3c3c;
    border-bottom: none;
    background: var(--bar);
}

.side-tools.right {
    width: 32px;
}

.grip-h {
    width: 20px;
    height: 2px;
    margin: 2px 4px 3px;
    background: repeating-linear-gradient(to right, #999 0 2px, transparent 2px 4px);
}

.sep-h {
    width: 20px;
    height: 2px;
    margin: 2px 4px;
    border-top: 1px solid #222;
    border-bottom: 1px solid var(--edge);
}

.selected {
    background: #607da5;
}

.letter {
    font: bold 22px/24px "Liberation Serif", serif;
}

/* Drawing document */
.document {
    flex: 1;
    min-width: 0;
    display: flex;
    flex-direction: column;
    background: var(--panel);
}

.ruler-row {
    display: flex;
    height: 15px;
    flex: none;
    margin-top: 1px;
    border-top: 1px solid var(--edge);
}

.ruler-corner {
    background: #b9b9a9;
}

.ruler-top {
    flex: 1;
    min-width: 0;
}

.ruler-top text, .ruler-left text {
    font: 8px "Open Sans", sans-serif;
    fill: #ddd;
}

.ruler-body {
    flex: 1;
    min-height: 0;
    display: flex;
}

.sheet {
    flex: 1;
    min-width: 0;
    display: flex;
    flex-direction: column;
    border: 1px solid var(--edge);
    border-right: none;
    border-bottom: none;
}

.sheet-main {
    flex: 1;
    min-height: 0;
    display: flex;
}

.canvas {
    flex: 1;
    margin-left: 1px;
    background: #fff;
    border: 1px solid #ddd;
    border-left: none;
    border-top: none;
}

.scroll-v, .scroll-h {
    display: flex;
    background: var(--track);
}

.scroll-v {
    flex-direction: column;
    width: 17px;
    margin-right: 1px;
}

.scroll-v button, .scroll-h button {
    display: grid;
    place-items: center;
    width: 17px;
    height: 17px;
    border: 1px solid #3f3f3f;
    background: var(--panel);
}

.scroll-v path, .scroll-h path, .spin-buttons path {
    fill: #fff;
}

.track {
    flex: 1;
    display: flex;
}

.scroll-v .track {
    flex-direction: column;
    padding-top: 108px;
}

.scroll-h .track {
    padding-left: 460px;
}

.thumb {
    background: var(--panel);
    border: 1px solid #3f3f3f;
}

.scroll-v .thumb {
    height: 45px;
}

.scroll-h .thumb {
    width: 166px;
}

.sheet-foot {
    display: flex;
    height: 18px;
    padding-right: 18px;
}

.tabs {
    display: flex;
    align-items: flex-start;
    gap: 2px;
    width: 168px;
    padding-left: 5px;
    border-right: 3px solid #fff;
    margin-right: 1px;
}

.tab {
    display: flex;
    align-items: center;
    gap: 3px;
    height: 17px;
    padding: 0 8px 0 5px;
    border: 1px solid #404040;
    border-top: none;
    border-radius: 0 0 4px 4px;
    color: #bbb;
    white-space: nowrap;
}

.tab.active {
    color: #fff;
    background: #666;
    border-color: #000;
}

.scroll-h {
    flex: 1;
    height: 17px;
}

/* Palettes on the right */
.palettes {
    width: 28px;
    padding: 2px 0 0 2px;
    border-top: 1px solid #3f3f3f;
    background: var(--panel);
}

.palette {
    display: flex;
    flex-direction: column;
    align-items: center;
    width: 26px;
    height: 28px;
    margin-bottom: 1px;
    padding-top: 4px;
    border: 1px solid var(--edge);
    border-right: none;
    border-bottom: 1px solid #222;
    border-radius: 4px 0 0 4px;
    background: #4d4d4d;
}

.palette svg {
    width: 22px;
    height: 20px;
    stroke: #ddd;
}

.palette .frame {
    stroke: #fff;
}

.palette.open {
    width: 27px;
    height: auto;
    margin-left: -1px;
    padding: 2px 3px 8px 0;
    background: var(--panel);
}

.palette span {
    writing-mode: vertical-rl;
    margin-top: 3px;
}

/* Inspector bar */
.inspector {
    display: flex;
    align-items: center;
    height: 41px;
    flex: none;
    border-top: 1px solid var(--edge);
    border-left: 1px solid var(--edge);
    background: var(--bar);
}

.inspector .grip {
    height: 30px;
}

.inspector .sep {
    height: 28px;
}

.coords {
    display: flex;
    gap: 4px;
    height: 38px;
    padding: 0 1px 0 3px;
    background: var(--panel);
}

.coord {
    width: 52px;
}

.coord label {
    display: flex;
    align-items: center;
    gap: 2px;
    height: 17px;
    padding-left: 1px;
}

.coord input, .spinner {
    width: 100%;
    height: 20px;
    padding: 0 3px 2px;
    border: 1px solid var(--field-edge);
    background: var(--field);
}

.spinner {
    display: flex;
    padding: 0;
}

.spinner input {
    flex: 1;
    min-width: 0;
    height: 18px;
    border: none;
}

.spin-buttons {
    width: 16px;
    display: flex;
    flex-direction: column;
}

.spin-buttons button {
    flex: 1;
    display: grid;
    place-items: center;
    border: 1px solid #606060;
    background: #444;
}

/* Status bar */
.statusbar {
    display: flex;
    align-items: center;
    height: 26px;
    flex: none;
    padding: 4px 16px 2px 8px;
    border-top: 1px solid #3f3f3f;
    background: var(--panel);
}

.hint {
    flex: 1;
    align-self: flex-start;
    margin-top: -2px;
}

.statusbar > button {
    margin-right: 8px;
}

.axis {
    display: flex;
    align-items: center;
    gap: 1px;
    margin-left: 8px;
}

.axis label {
    display: flex;
    flex-direction: column;
    align-items: center;
    width: 10px;
    font-size: 8px;
    line-height: 9px;
    color: #ccc;
}

.axis input[type="checkbox"] {
    appearance: none;
    width: 8px;
    height: 8px;
    border: 1px solid #fff;
}

.axis input[type="text"] {
    width: 73px;
    height: 19px;
    padding: 0 4px;
    border: 1px solid var(--field-edge);
    background: var(--field);
}

.off input[type="text"], .off label {
    color: #888;
}

.off input[type="checkbox"] {
    border-color: #888;
}

.zoom, .clock {
    align-self: flex-start;
    margin-top: -2px;
    white-space: nowrap;
}

.zoom {
    width: 57px;
    margin-left: 9px;
}
```
